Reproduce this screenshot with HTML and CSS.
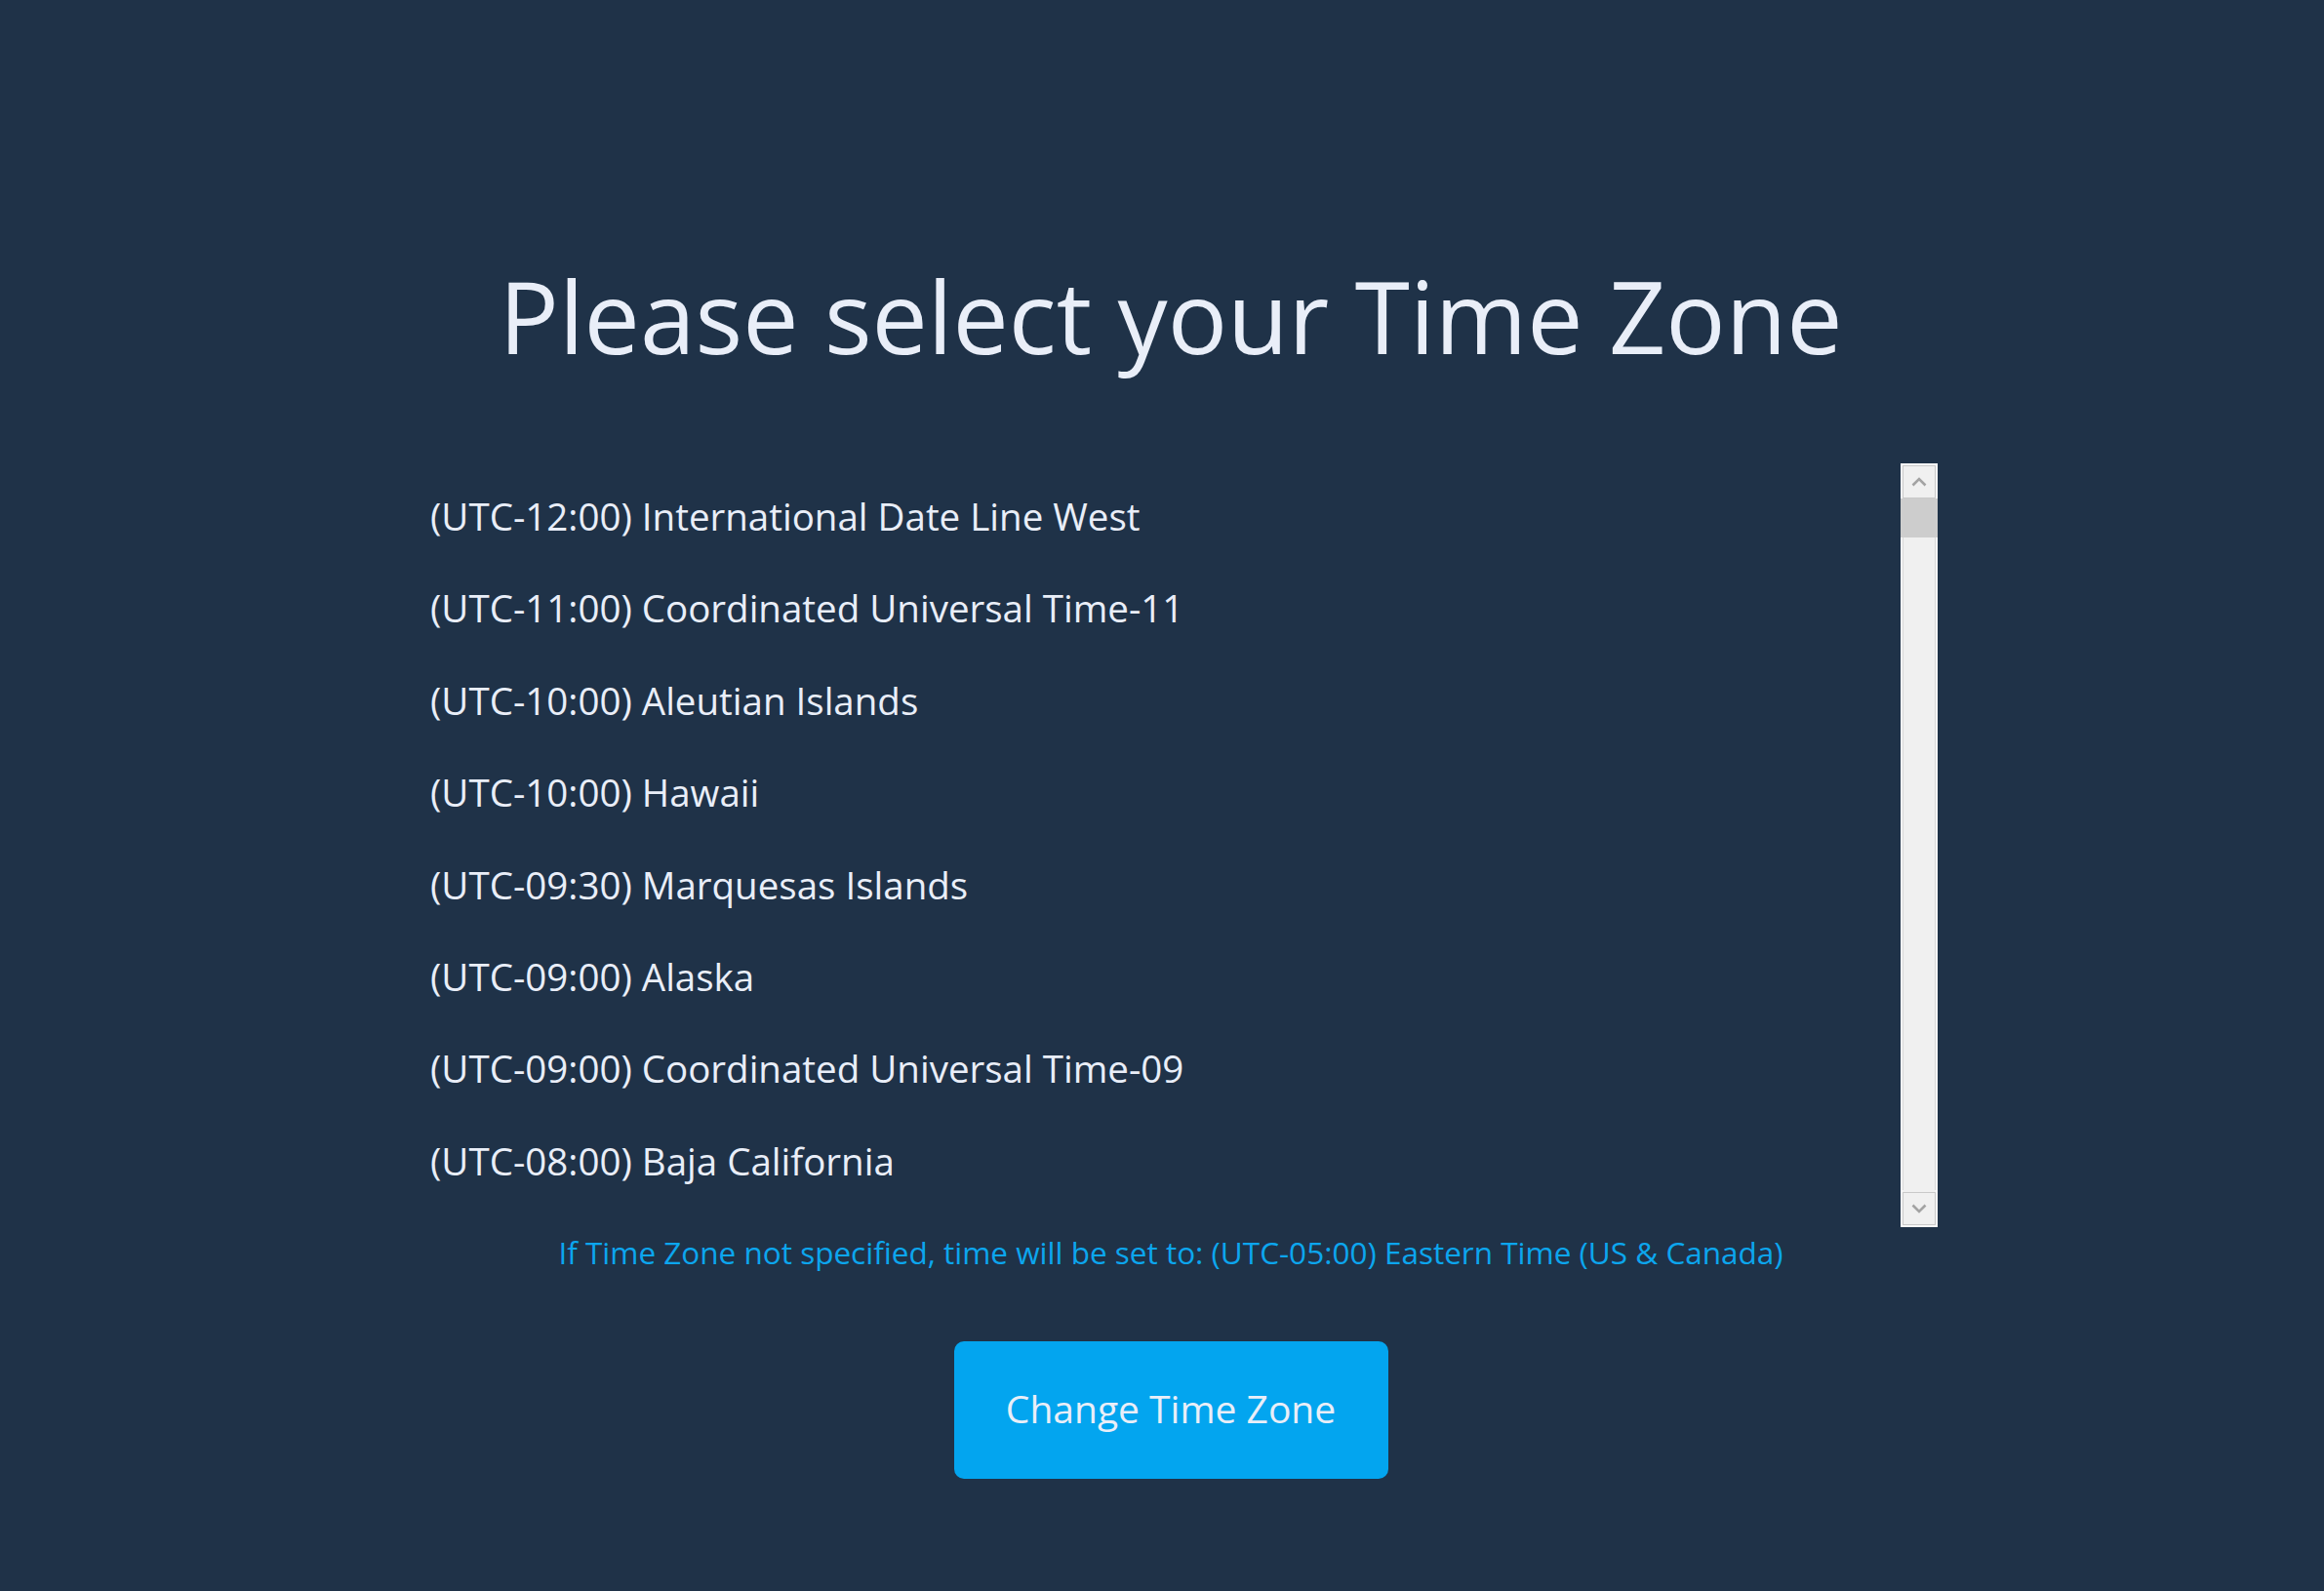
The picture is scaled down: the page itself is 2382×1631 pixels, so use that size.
FILE: index.html
```html
<!DOCTYPE html>
<html lang="en">
<head>
<meta charset="utf-8">
<title>Select Time Zone</title>
<link rel="stylesheet" href="styles.css">
</head>
<body>
<main class="page">
  <h1 class="title">Please select your Time Zone</h1>
  <div class="listbox">
    <ul class="zones">
      <li>(UTC-12:00) International Date Line West</li>
      <li>(UTC-11:00) Coordinated Universal Time-11</li>
      <li>(UTC-10:00) Aleutian Islands</li>
      <li>(UTC-10:00) Hawaii</li>
      <li>(UTC-09:30) Marquesas Islands</li>
      <li>(UTC-09:00) Alaska</li>
      <li>(UTC-09:00) Coordinated Universal Time-09</li>
      <li>(UTC-08:00) Baja California</li>
    </ul>
    <div class="scrollbar">
      <div class="sb-btn">
        <svg width="16" height="10" viewBox="0 0 16 10"><path d="M1.5 8.5 L8 2 L14.5 8.5" fill="none" stroke="#a3a3a3" stroke-width="2.6"/></svg>
      </div>
      <div class="sb-thumb"></div>
      <div class="sb-track"></div>
      <div class="sb-btn">
        <svg width="16" height="10" viewBox="0 0 16 10"><path d="M1.5 1.5 L8 8 L14.5 1.5" fill="none" stroke="#a3a3a3" stroke-width="2.6"/></svg>
      </div>
    </div>
  </div>
  <p class="note">If Time Zone not specified, time will be set to: (UTC-05:00) Eastern Time (US &amp; Canada)</p>
  <button class="btn" type="button">Change Time Zone</button>
</main>
</body>
</html>
```

FILE: styles.css
```css
html, body {
  margin: 0;
  padding: 0;
  background: #1f3248;
}

body {
  font-family: "Open Sans", "Noto Sans", sans-serif;
  color: #e9eef8;
  height: 1631px;
  overflow: hidden;
}

.page {
  display: flex;
  flex-direction: column;
  align-items: center;
  padding-top: 254px;
  padding-left: 18px;
}

.title {
  margin: 0;
  font-size: 102px;
  line-height: 140px;
  font-weight: 400;
  color: #e9eef8;
  white-space: nowrap;
}

.listbox {
  margin-top: 81px;
  width: 1572px;
  height: 783px;
  display: flex;
  box-sizing: border-box;
}

.zones {
  flex: 1;
  list-style: none;
  margin: 0;
  padding: 7px 0 0 27px;
  overflow: hidden;
}

.zones li {
  font-size: 38.5px;
  line-height: 94.4px;
  height: 94.4px;
  white-space: nowrap;
}

.scrollbar {
  width: 38px;
  height: 783px;
  background: #f0f0f0;
  border: 2px solid #f9f9f9;
  box-sizing: border-box;
  display: flex;
  flex-direction: column;
}

.sb-btn {
  height: 34px;
  border: 1px solid #c9c9c9;
  box-sizing: border-box;
  display: flex;
  align-items: center;
  justify-content: center;
  flex: none;
}

.sb-thumb {
  height: 40px;
  background: #cdcdcd;
  margin: 0 -2px;
  flex: none;
}

.sb-track {
  flex: 1;
  border-left: 1px solid #d8d8d8;
  border-right: 1px solid #d8d8d8;
  margin-bottom: 2px;
}

.note {
  margin: 6px 0 0;
  font-size: 31.5px;
  line-height: 40px;
  color: #0ca6ee;
  white-space: nowrap;
}

.btn {
  margin-top: 71px;
  width: 445px;
  height: 141px;
  border: none;
  border-radius: 10px;
  background: #03a5ef;
  color: #e9eef8;
  font-family: "Open Sans", "Noto Sans", sans-serif;
  font-size: 39px;
  line-height: 1;
  padding: 0 0 4px;
  cursor: pointer;
}
```
